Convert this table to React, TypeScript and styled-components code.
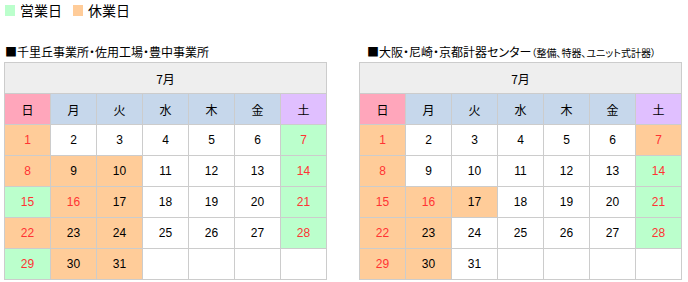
import React from 'react';
import styled, { createGlobalStyle } from 'styled-components';

type Kind = 'work' | 'off' | 'plain';

interface DayCell {
  day?: number;
  kind: Kind;
  red?: boolean;
}

const GlobalStyle = createGlobalStyle`
  body {
    margin: 0;
    background: #ffffff;
    font-family: "Liberation Sans", "Noto Sans CJK JP", sans-serif;
    color: #000000;
  }
`;

const WEEK = ['日', '月', '火', '水', '木', '金', '土'];

// 営業日 = work, 休業日 = off
const buildMonth = (offDays: number[], workDays: number[], redDays: number[]) => {
  const cells: DayCell[] = [];
  for (let d = 1; d <= 35; d++) {
    if (d > 31) {
      cells.push({ kind: 'plain' });
      continue;
    }
    let kind: Kind = 'plain';
    if (offDays.includes(d)) kind = 'off';
    if (workDays.includes(d)) kind = 'work';
    cells.push({ day: d, kind, red: redDays.includes(d) });
  }
  return cells;
};

const RED = [1, 7, 8, 14, 15, 16, 21, 22, 28, 29];

const senriyama = buildMonth(
  [1, 8, 9, 10, 16, 17, 22, 23, 24, 30, 31],
  [7, 14, 15, 21, 28, 29],
  RED
);

const osaka = buildMonth(
  [1, 7, 8, 15, 16, 17, 22, 23, 29, 30],
  [14, 21, 28],
  RED
);

const App: React.FC = () => {
  return (
    <Page>
      <GlobalStyle />
      <Legend>
        <Swatch color="#bbffcc" />
        <LegendLabel>営業日</LegendLabel>
        <Swatch color="#ffcc99" />
        <LegendLabel>休業日</LegendLabel>
      </Legend>
      <Calendars>
        <Block>
          <Title>■千里丘事業所・佐用工場・豊中事業所</Title>
          <Month cells={senriyama} />
        </Block>
        <Block>
          <Title indent>
            ■大阪・尼崎・京都計器センター<Small>（整備、特器、ユニット式計器）</Small>
          </Title>
          <Month cells={osaka} />
        </Block>
      </Calendars>
    </Page>
  );
};

const Month: React.FC<{ cells: DayCell[] }> = ({ cells }) => (
  <Grid>
    <MonthHead>7月</MonthHead>
    {WEEK.map((w, i) => (
      <WeekHead key={w} tone={i === 0 ? 'sun' : i === 6 ? 'sat' : 'day'}>
        {w}
      </WeekHead>
    ))}
    {cells.map((c, i) => (
      <Cell key={i} kind={c.kind} red={c.red}>
        {c.day ?? ''}
      </Cell>
    ))}
  </Grid>
);

const Page = styled.div`
  padding: 3px 0 0 4px;
  width: 688px;
  box-sizing: border-box;
`;

const Legend = styled.div`
  display: flex;
  align-items: center;
  height: 14px;
  padding-left: 1px;
`;

const Swatch = styled.span<{ color: string }>`
  display: inline-block;
  width: 10px;
  height: 11px;
  background: ${p => p.color};
  margin-right: 5px;
`;

const LegendLabel = styled.span`
  font-family: "Noto Sans CJK JP", sans-serif;
  font-size: 14px;
  line-height: 14px;
  margin-right: 11px;
`;

const Calendars = styled.div`
  display: flex;
  gap: 32px;
  margin-top: 27px;
`;

const Block = styled.div`
  display: flex;
  flex-direction: column;
`;

const Title = styled.div<{ indent?: boolean }>`
  font-family: "Noto Sans CJK JP", sans-serif;
  font-size: 12px;
  line-height: 16px;
  height: 16px;
  padding-left: ${p => (p.indent ? '8px' : '1px')};
  margin-bottom: 2px;
  font-feature-settings: "palt";
  white-space: nowrap;
`;

const Small = styled.span`
  font-size: 10px;
`;

const Grid = styled.div`
  display: grid;
  grid-template-columns: repeat(7, 45px);
  grid-auto-rows: 30px;
  gap: 1px;
  padding: 1px;
  background: #cccccc;
  width: max-content;
`;

const CellBase = styled.div`
  display: flex;
  align-items: center;
  justify-content: center;
  font-size: 12px;
`;

const MonthHead = styled(CellBase)`
  grid-column: 1 / -1;
  background: #eeeeee;
  font-family: "Noto Sans CJK JP", sans-serif;
`;

const WeekHead = styled(CellBase)<{ tone: 'sun' | 'sat' | 'day' }>`
  font-family: "Noto Sans CJK JP", sans-serif;
  background: ${p =>
    p.tone === 'sun' ? '#ffa6bb' : p.tone === 'sat' ? '#e0bfff' : '#c6d7eb'};
`;

const Cell = styled(CellBase)<{ kind: Kind; red?: boolean }>`
  background: ${p =>
    p.kind === 'off' ? '#ffcc99' : p.kind === 'work' ? '#bbffcc' : '#ffffff'};
  color: ${p => (p.red ? '#ff3333' : '#000000')};
`;

export default App;
